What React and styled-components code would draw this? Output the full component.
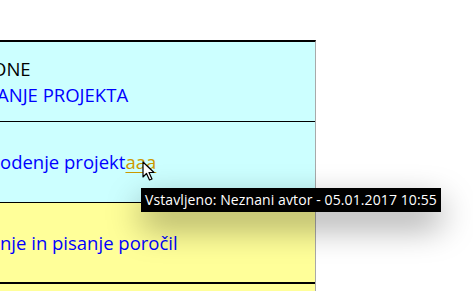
import styled, { createGlobalStyle } from "styled-components";

const Global = createGlobalStyle`
  html, body {
    margin: 0;
    padding: 0;
    background: #fff;
    overflow: hidden;
  }
  body {
    font-family: "Open Sans", "Lato", sans-serif;
  }
`;

const Page = styled.div`
  position: relative;
  width: 473px;
  height: 291px;
  padding-top: 40px;
  box-sizing: border-box;
  overflow: hidden;
`;

const Table = styled.div`
  width: 316px;
  border-top: 2px solid #000;
  border-right: 1px solid #a9a9a9;
  box-sizing: border-box;
  display: flex;
  flex-direction: column;
`;

const Row = styled.div`
  height: ${(p) => p.h}px;
  background: ${(p) => (p.yellow ? "#ffff99" : "#ccffff")};
  border-bottom: ${(p) => p.border || 0}px solid #000;
  display: flex;
  flex-direction: column;
  justify-content: center;
  font-size: 18.5px;
  line-height: 26px;
  color: #0000ff;
  white-space: nowrap;
  overflow: hidden;
`;

const Line = styled.div`
  color: ${(p) => p.color || "#0000ff"};
  margin-left: ${(p) => p.shift || 0}px;
`;

const Inserted = styled.span`
  color: #cc9900;
  text-decoration: underline;
  text-underline-offset: 3px;
`;

const Tooltip = styled.div`
  position: absolute;
  left: 141px;
  top: 188px;
  height: 24px;
  padding: 0 4px;
  background: #000;
  color: #fff;
  font-family: "Open Sans", sans-serif;
  font-size: 14px;
  letter-spacing: 0.1px;
  line-height: 24px;
  white-space: nowrap;
  box-shadow: 0 14px 34px rgba(0, 0, 0, 0.4);
`;

const Cursor = styled.svg`
  position: absolute;
  left: 142px;
  top: 161px;
`;

export default function App() {
  return (
    <Page>
      <Global />
      <Table>
        <Row h={79} border={1}>
          <Line color="#000" shift={-8}>ONE</Line>
          <Line shift={-3}>ANJE PROJEKTA</Line>
        </Row>
        <Row h={80} border={1}>
          <Line>
            odenje projekt<Inserted>aaa</Inserted>
          </Line>
        </Row>
        <Row h={79} border={2} yellow>
          <Line>nje in pisanje poročil</Line>
        </Row>
        <Row h={20} yellow />
      </Table>
      <Cursor width="16" height="22" viewBox="0 0 16 22">
        <path
          d="M1 1 L1 16 L4.5 12.5 L7.5 19 L10 18 L7 11.5 L12 11.5 Z"
          fill="#fff"
          stroke="#000"
          strokeWidth="1.2"
          strokeLinejoin="round"
        />
      </Cursor>
      <Tooltip>Vstavljeno: Neznani avtor - 05.01.2017 10:55</Tooltip>
    </Page>
  );
}
